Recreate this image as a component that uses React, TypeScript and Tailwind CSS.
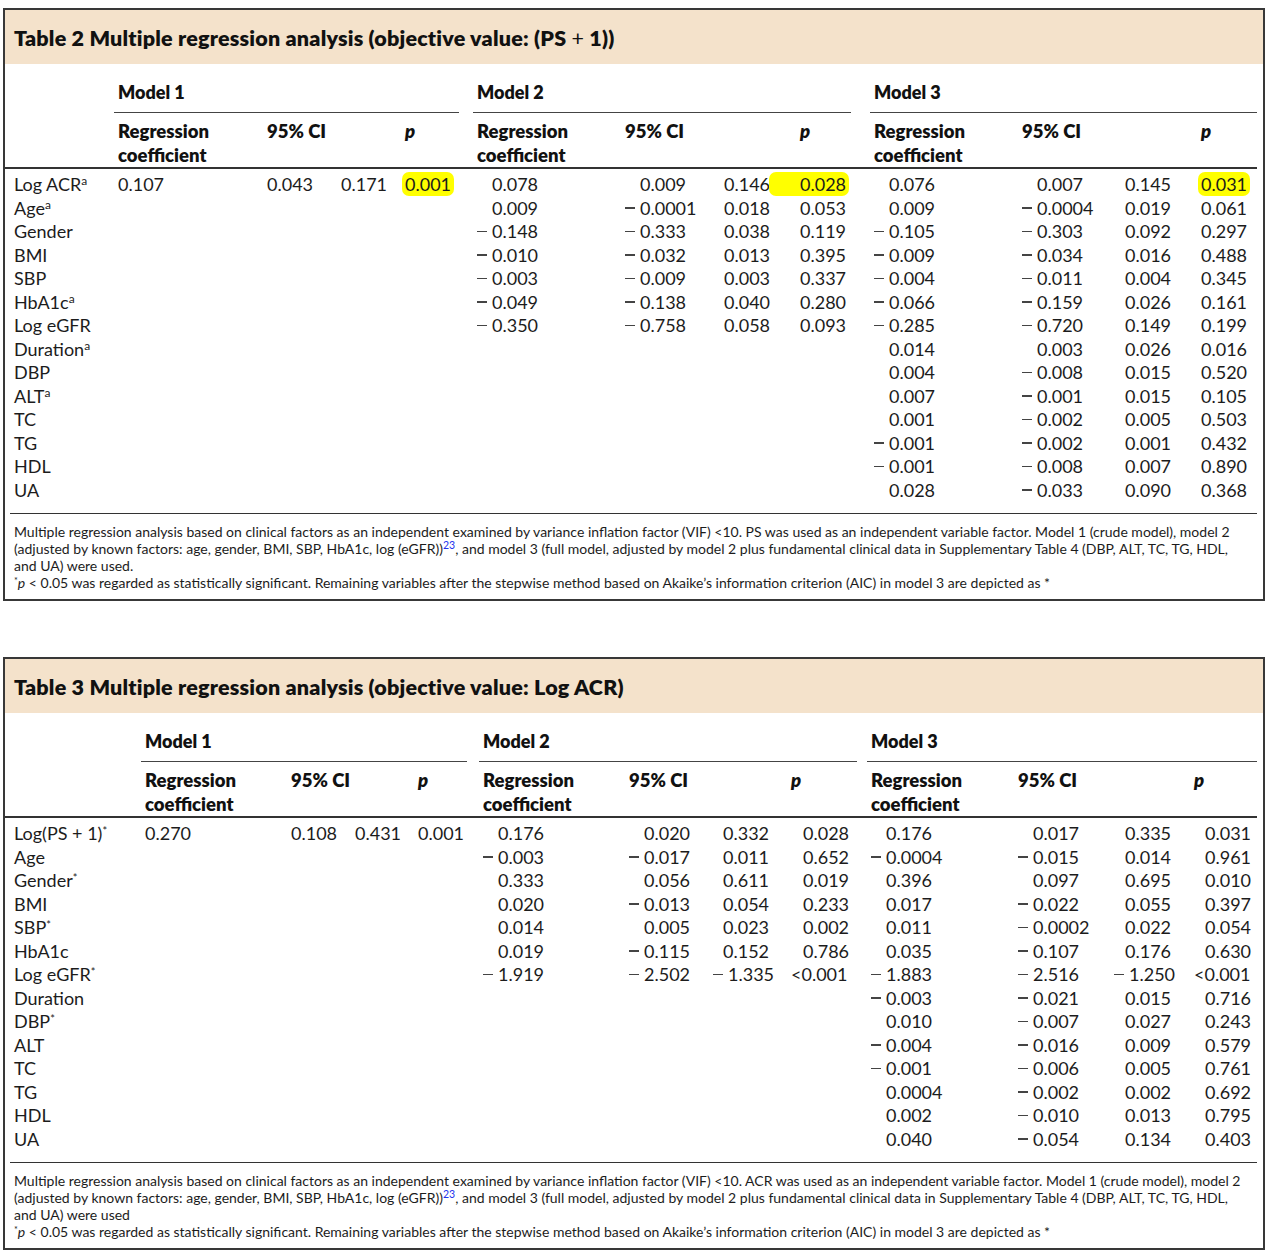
import React from "react";

type Cell = string | { v: string; hl?: "n" | "w" };
type Row = { label: React.ReactNode; cells: Cell[] };

const font = "font-['Lato','Open_Sans',sans-serif]";

function Sup({ c }: { c: string }) {
  return <sup className="text-[12px] font-normal">{c}</sup>;
}

function Minus() {
  return <span className="inline-block w-[10px] h-[1.4px] bg-[#444] mr-[5px] align-[6px]" />;
}

function Num({ v, indent }: { v: string; indent: number }) {
  if (v.startsWith("−")) {
    return (
      <span>
        <Minus />
        {v.slice(1)}
      </span>
    );
  }
  if (v.startsWith("<")) return <span>{v}</span>;
  return <span style={{ paddingLeft: indent }}>{v}</span>;
}

function ValueCell({ c, indent }: { c: Cell; indent: number }) {
  if (typeof c === "string") {
    return (
      <div className="pl-[4px] whitespace-nowrap">
        {c ? <Num v={c} indent={indent} /> : null}
      </div>
    );
  }
  const hlClass =
    c.hl === "w"
      ? "bg-[#ffff00] rounded-[7px] pl-[31px] -ml-[31px] pr-[3px] -mr-[3px] py-[1px]"
      : "bg-[#ffff00] rounded-[7px] px-[3px] -mx-[3px] py-[1px]";
  return (
    <div className="pl-[4px] whitespace-nowrap">
      <span className={hlClass}>{c.v}</span>
    </div>
  );
}

function RegTable({
  title,
  gridClass,
  modelMargins,
  indents,
  rows,
  footnote,
}: {
  title: React.ReactNode;
  gridClass: string;
  modelMargins: string[];
  indents: number[];
  rows: Row[];
  footnote: React.ReactNode;
}) {
  return (
    <div className="border-2 border-[#383838] bg-white">
      <div className="h-[54px] bg-[#f4e2cb] flex items-center pl-[9px] pt-[1px]">
        <div className="text-[21.5px] font-extrabold text-[#111] leading-[26px] tracking-[0.2px]">{title}</div>
      </div>
      <div className="pr-[6px] text-[18px] text-[#1c1c1c]">
        <div className={gridClass}>
          <div />
          {["Model 1", "Model 2", "Model 3"].map((m, i) => (
            <div
              key={m}
              className={`col-span-4 h-[49px] flex items-end pb-[8px] border-b-[1.5px] border-[#444] pl-[4px] font-extrabold leading-[24px] text-[#111] ${modelMargins[i]}`}
            >
              {m}
            </div>
          ))}
        </div>
        <div className={`${gridClass} border-b-2 border-[#333] pt-[6px] leading-[24px] font-extrabold text-[18.5px] text-[#111]`}>
          <div />
          {[0, 1, 2].map((i) => (
            <React.Fragment key={i}>
              <div className="pl-[4px]">
                Regression
                <br />
                coefficient
              </div>
              <div className="col-span-2 pl-[4px]">95% CI</div>
              <div className="pl-[4px] italic">p</div>
            </React.Fragment>
          ))}
        </div>
        <div className="pt-[4px] pb-[11px]">
          {rows.map((r, ri) => (
            <div key={ri} className={`${gridClass} h-[23.5px] leading-[23.5px]`}>
              <div className="pl-[9px] whitespace-nowrap">{r.label}</div>
              {r.cells.map((c, ci) => (
                <ValueCell key={ci} c={c} indent={indents[ci + 1]} />
              ))}
            </div>
          ))}
        </div>
      </div>
      <div className="ml-[5px] mr-[6px] border-t-[1.5px] border-[#333] pt-[9px] pb-[8px] pl-[4px] text-[14px] leading-[17px] text-[#1c1c1c] whitespace-nowrap">
        {footnote}
      </div>
    </div>
  );
}

const E = ["", "", "", ""];

const t2rows: Row[] = [
  {
    label: <>Log ACR<Sup c="a" /></>,
    cells: ["0.107", "0.043", "0.171", { v: "0.001", hl: "n" }, "0.078", "0.009", "0.146", { v: "0.028", hl: "w" }, "0.076", "0.007", "0.145", { v: "0.031", hl: "n" }],
  },
  { label: <>Age<Sup c="a" /></>, cells: [...E, "0.009", "−0.0001", "0.018", "0.053", "0.009", "−0.0004", "0.019", "0.061"] },
  { label: "Gender", cells: [...E, "−0.148", "−0.333", "0.038", "0.119", "−0.105", "−0.303", "0.092", "0.297"] },
  { label: "BMI", cells: [...E, "−0.010", "−0.032", "0.013", "0.395", "−0.009", "−0.034", "0.016", "0.488"] },
  { label: "SBP", cells: [...E, "−0.003", "−0.009", "0.003", "0.337", "−0.004", "−0.011", "0.004", "0.345"] },
  { label: <>HbA1c<Sup c="a" /></>, cells: [...E, "−0.049", "−0.138", "0.040", "0.280", "−0.066", "−0.159", "0.026", "0.161"] },
  { label: "Log eGFR", cells: [...E, "−0.350", "−0.758", "0.058", "0.093", "−0.285", "−0.720", "0.149", "0.199"] },
  { label: <>Duration<Sup c="a" /></>, cells: [...E, ...E, "0.014", "0.003", "0.026", "0.016"] },
  { label: "DBP", cells: [...E, ...E, "0.004", "−0.008", "0.015", "0.520"] },
  { label: <>ALT<Sup c="a" /></>, cells: [...E, ...E, "0.007", "−0.001", "0.015", "0.105"] },
  { label: "TC", cells: [...E, ...E, "0.001", "−0.002", "0.005", "0.503"] },
  { label: "TG", cells: [...E, ...E, "−0.001", "−0.002", "0.001", "0.432"] },
  { label: "HDL", cells: [...E, ...E, "−0.001", "−0.008", "0.007", "0.890"] },
  { label: "UA", cells: [...E, ...E, "0.028", "−0.033", "0.090", "0.368"] },
];

const St = () => <sup className="text-[11px] font-normal">*</sup>;

const t3rows: Row[] = [
  { label: <>Log(PS + 1)<St /></>, cells: ["0.270", "0.108", "0.431", "0.001", "0.176", "0.020", "0.332", "0.028", "0.176", "0.017", "0.335", "0.031"] },
  { label: "Age", cells: [...E, "−0.003", "−0.017", "0.011", "0.652", "−0.0004", "−0.015", "0.014", "0.961"] },
  { label: <>Gender<St /></>, cells: [...E, "0.333", "0.056", "0.611", "0.019", "0.396", "0.097", "0.695", "0.010"] },
  { label: "BMI", cells: [...E, "0.020", "−0.013", "0.054", "0.233", "0.017", "−0.022", "0.055", "0.397"] },
  { label: <>SBP<St /></>, cells: [...E, "0.014", "0.005", "0.023", "0.002", "0.011", "−0.0002", "0.022", "0.054"] },
  { label: "HbA1c", cells: [...E, "0.019", "−0.115", "0.152", "0.786", "0.035", "−0.107", "0.176", "0.630"] },
  { label: <>Log eGFR<St /></>, cells: [...E, "−1.919", "−2.502", "−1.335", "<0.001", "−1.883", "−2.516", "−1.250", "<0.001"] },
  { label: "Duration", cells: [...E, ...E, "−0.003", "−0.021", "0.015", "0.716"] },
  { label: <>DBP<St /></>, cells: [...E, ...E, "0.010", "−0.007", "0.027", "0.243"] },
  { label: "ALT", cells: [...E, ...E, "−0.004", "−0.016", "0.009", "0.579"] },
  { label: "TC", cells: [...E, ...E, "−0.001", "−0.006", "0.005", "0.761"] },
  { label: "TG", cells: [...E, ...E, "0.0004", "−0.002", "0.002", "0.692"] },
  { label: "HDL", cells: [...E, ...E, "0.002", "−0.010", "0.013", "0.795"] },
  { label: "UA", cells: [...E, ...E, "0.040", "−0.054", "0.134", "0.403"] },
];

function Foot({ which }: { which: "PS" | "ACR" }) {
  return (
    <>
      <div>
        Multiple regression analysis based on clinical factors as an independent examined by variance inflation factor (VIF) &lt;10. {which} was used as an
        independent variable factor. Model 1 (crude model), model 2
        <br />
        (adjusted by known factors: age, gender, BMI, SBP, HbA1c, log (eGFR))
        <sup className="text-[10.5px] text-[#2233ee]">23</sup>, and model 3 (full model, adjusted by model 2 plus fundamental clinical data in Supplementary
        Table 4 (DBP, ALT, TC, TG, HDL,
        <br />
        and UA) were used{which === "PS" ? "." : ""}
      </div>
      <div>
        <sup className="text-[9px]">*</sup>
        <span className="italic">p</span> &lt; 0.05 was regarded as statistically significant. Remaining variables after the stepwise method based on Akaike’s
        information criterion (AIC) in model 3 are depicted as *
      </div>
    </>
  );
}

export default function App() {
  return (
    <div className={`${font} bg-white pt-[8px] pl-[3px] pr-[4px] pb-[6px] w-[1269px]`}>
      <RegTable
        title={
          <>
            Table 2 Multiple regression analysis (objective value: (PS <span className="font-normal">+</span> 1))
          </>
        }
        gridClass="grid grid-cols-[109px_149px_74px_64px_72px_148px_99px_76px_74px_148px_103px_76px_60px]"
        modelMargins={["mr-[14px]", "mr-[19px]", ""]}
        indents={[0, 0, 0, 0, 0, 15, 15, 0, 0, 15, 15, 0, 0]}
        rows={t2rows}
        footnote={<Foot which="PS" />}
      />
      <div className="h-[56px]" />
      <RegTable
        title={<>Table 3 Multiple regression analysis (objective value: Log ACR)</>}
        gridClass="grid grid-cols-[136px_146px_64px_63px_65px_146px_84px_78px_80px_147px_96px_80px_67px]"
        modelMargins={["mr-[12px]", "mr-[10px]", ""]}
        indents={[0, 0, 0, 0, 0, 15, 15, 10, 12, 15, 15, 11, 11]}
        rows={t3rows}
        footnote={<Foot which="ACR" />}
      />
    </div>
  );
}
